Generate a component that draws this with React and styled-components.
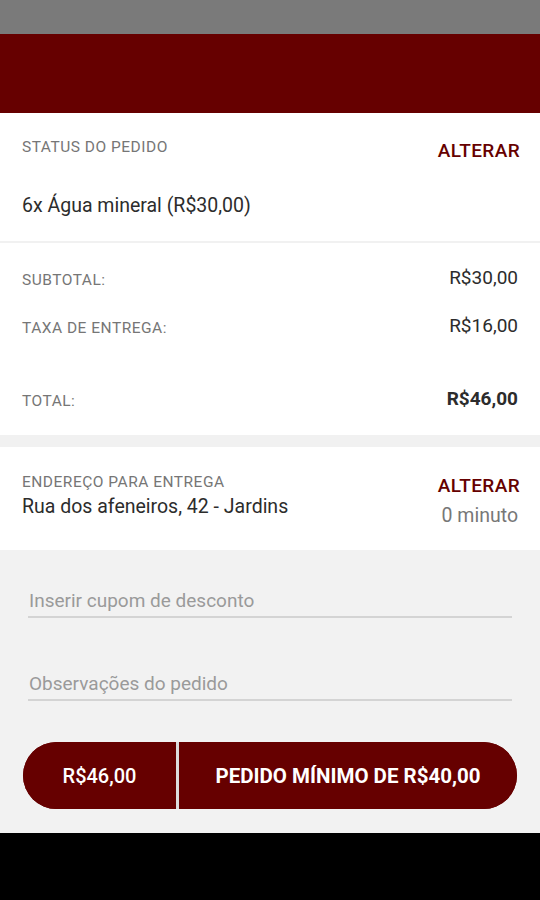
import React from "react";
import styled, { createGlobalStyle } from "styled-components";

const GlobalStyle = createGlobalStyle`
  html, body {
    margin: 0;
    padding: 0;
    background: #000;
  }
  body {
    font-family: Roboto, "Noto Sans", Arial, sans-serif;
  }
  * { box-sizing: border-box; }
`;

const RED = "#660000";

const Screen = styled.div`
  width: 540px;
  height: 900px;
  display: flex;
  flex-direction: column;
  background: #000;
  overflow: hidden;
`;

const StatusBar = styled.div`
  height: 34px;
  background: #7a7a7a;
`;

const Header = styled.div`
  height: 79px;
  background: ${RED};
`;

const Section = styled.div`
  background: #fff;
  height: ${(p) => p.$h}px;
  padding: ${(p) => p.$pad || "0 22px"};
  border-bottom: ${(p) => p.$gap || 0}px solid #f1f1f1;
  box-sizing: content-box;
`;

const Row = styled.div`
  display: flex;
  justify-content: space-between;
  align-items: ${(p) => p.$align || "center"};
  height: ${(p) => (p.$h ? `${p.$h}px` : "auto")};
  margin-top: ${(p) => p.$mt || 0}px;
`;

const Label = styled.div`
  font-size: 15.5px;
  line-height: 20px;
  color: #767676;
  letter-spacing: 0.5px;
  text-transform: uppercase;
`;

const Action = styled.button`
  background: none;
  border: none;
  padding: 0;
  font-family: inherit;
  font-size: 19px;
  line-height: 20px;
  font-weight: 500;
  color: ${RED};
  letter-spacing: 0.4px;
  margin-top: ${(p) => p.$mt || 0}px;
  margin-right: -2px;
`;

const Item = styled.div`
  font-size: 19.5px;
  line-height: 24px;
  color: #2c2c2c;
  margin-top: ${(p) => p.$mt || 0}px;
`;

const Value = styled.div`
  font-size: 19px;
  line-height: 24px;
  margin-top: -4px;
  color: #2c2c2c;
  font-weight: ${(p) => (p.$bold ? 700 : 400)};
`;

const Column = styled.div`
  display: flex;
  flex-direction: column;
  align-items: ${(p) => (p.$right ? "flex-end" : "flex-start")};
`;

const Muted = styled.div`
  font-size: 19.5px;
  line-height: 24px;
  color: #777;
  margin-top: 8px;
`;

const Bottom = styled.div`
  background: #f2f2f2;
  height: 283px;
  padding: 38px 28px 0;
  display: flex;
  flex-direction: column;
`;

const Field = styled.input`
  width: 484px;
  border: none;
  border-bottom: 2px solid #d4d4d4;
  background: transparent;
  font-family: inherit;
  font-size: 19px;
  line-height: 24px;
  height: 30px;
  color: #333;
  padding: 0 0 4px 1px;
  margin-bottom: ${(p) => p.$mb}px;
  outline: none;
  &::placeholder { color: #9a9a9a; }
`;

const Pill = styled.div`
  margin: 0 -5px;
  height: 67px;
  display: flex;
  border-radius: 34px;
  overflow: hidden;
  background: ${RED};
`;

const PillPart = styled.button`
  border: none;
  background: ${RED};
  color: #fff;
  font-family: inherit;
  font-size: ${(p) => (p.$bold ? 20.5 : 20)}px;
  font-weight: ${(p) => (p.$bold ? 700 : 500)};
  width: ${(p) => p.$w}px;
  flex: ${(p) => (p.$w ? "none" : 1)};
  padding: 0;
  padding-left: ${(p) => p.$pl || 0}px;
  border-left: ${(p) => (p.$sep ? "3px solid #dcdcdc" : "none")};
`;

const NavBar = styled.div`
  flex: 1;
  background: #000;
`;

export default function App() {
  return (
    <Screen>
      <GlobalStyle />
      <StatusBar />
      <Header />

      <Section $h={128} $gap={2}>
        <Row $align="flex-start" $mt={24}>
          <Label>Status do pedido</Label>
          <Action $mt={4}>ALTERAR</Action>
        </Row>
        <Item $mt={33}>6x Água mineral (R$30,00)</Item>
      </Section>

      <Section $h={192} $gap={12}>
        <Row $h={26} $mt={24}>
          <Label>Subtotal:</Label>
          <Value>R$30,00</Value>
        </Row>
        <Row $h={26} $mt={22}>
          <Label>Taxa de entrega:</Label>
          <Value>R$16,00</Value>
        </Row>
        <Row $h={26} $mt={47}>
          <Label>Total:</Label>
          <Value $bold>R$46,00</Value>
        </Row>
      </Section>

      <Section $h={103}>
        <Row $align="flex-start" $mt={25}>
          <Column>
            <Label>Endereço para entrega</Label>
            <Item $mt={3}>Rua dos afeneiros, 42 - Jardins</Item>
          </Column>
          <Column $right>
            <Action $mt={4}>ALTERAR</Action>
            <Muted>0 minuto</Muted>
          </Column>
        </Row>
      </Section>

      <Bottom>
        <Field placeholder="Inserir cupom de desconto" $mb={53} />
        <Field placeholder="Observações do pedido" $mb={41} />
        <Pill>
          <PillPart $w={153}>R$46,00</PillPart>
          <PillPart $sep $bold $pl={0}>PEDIDO MÍNIMO DE R$40,00</PillPart>
        </Pill>
      </Bottom>
      <NavBar />
    </Screen>
  );
}
